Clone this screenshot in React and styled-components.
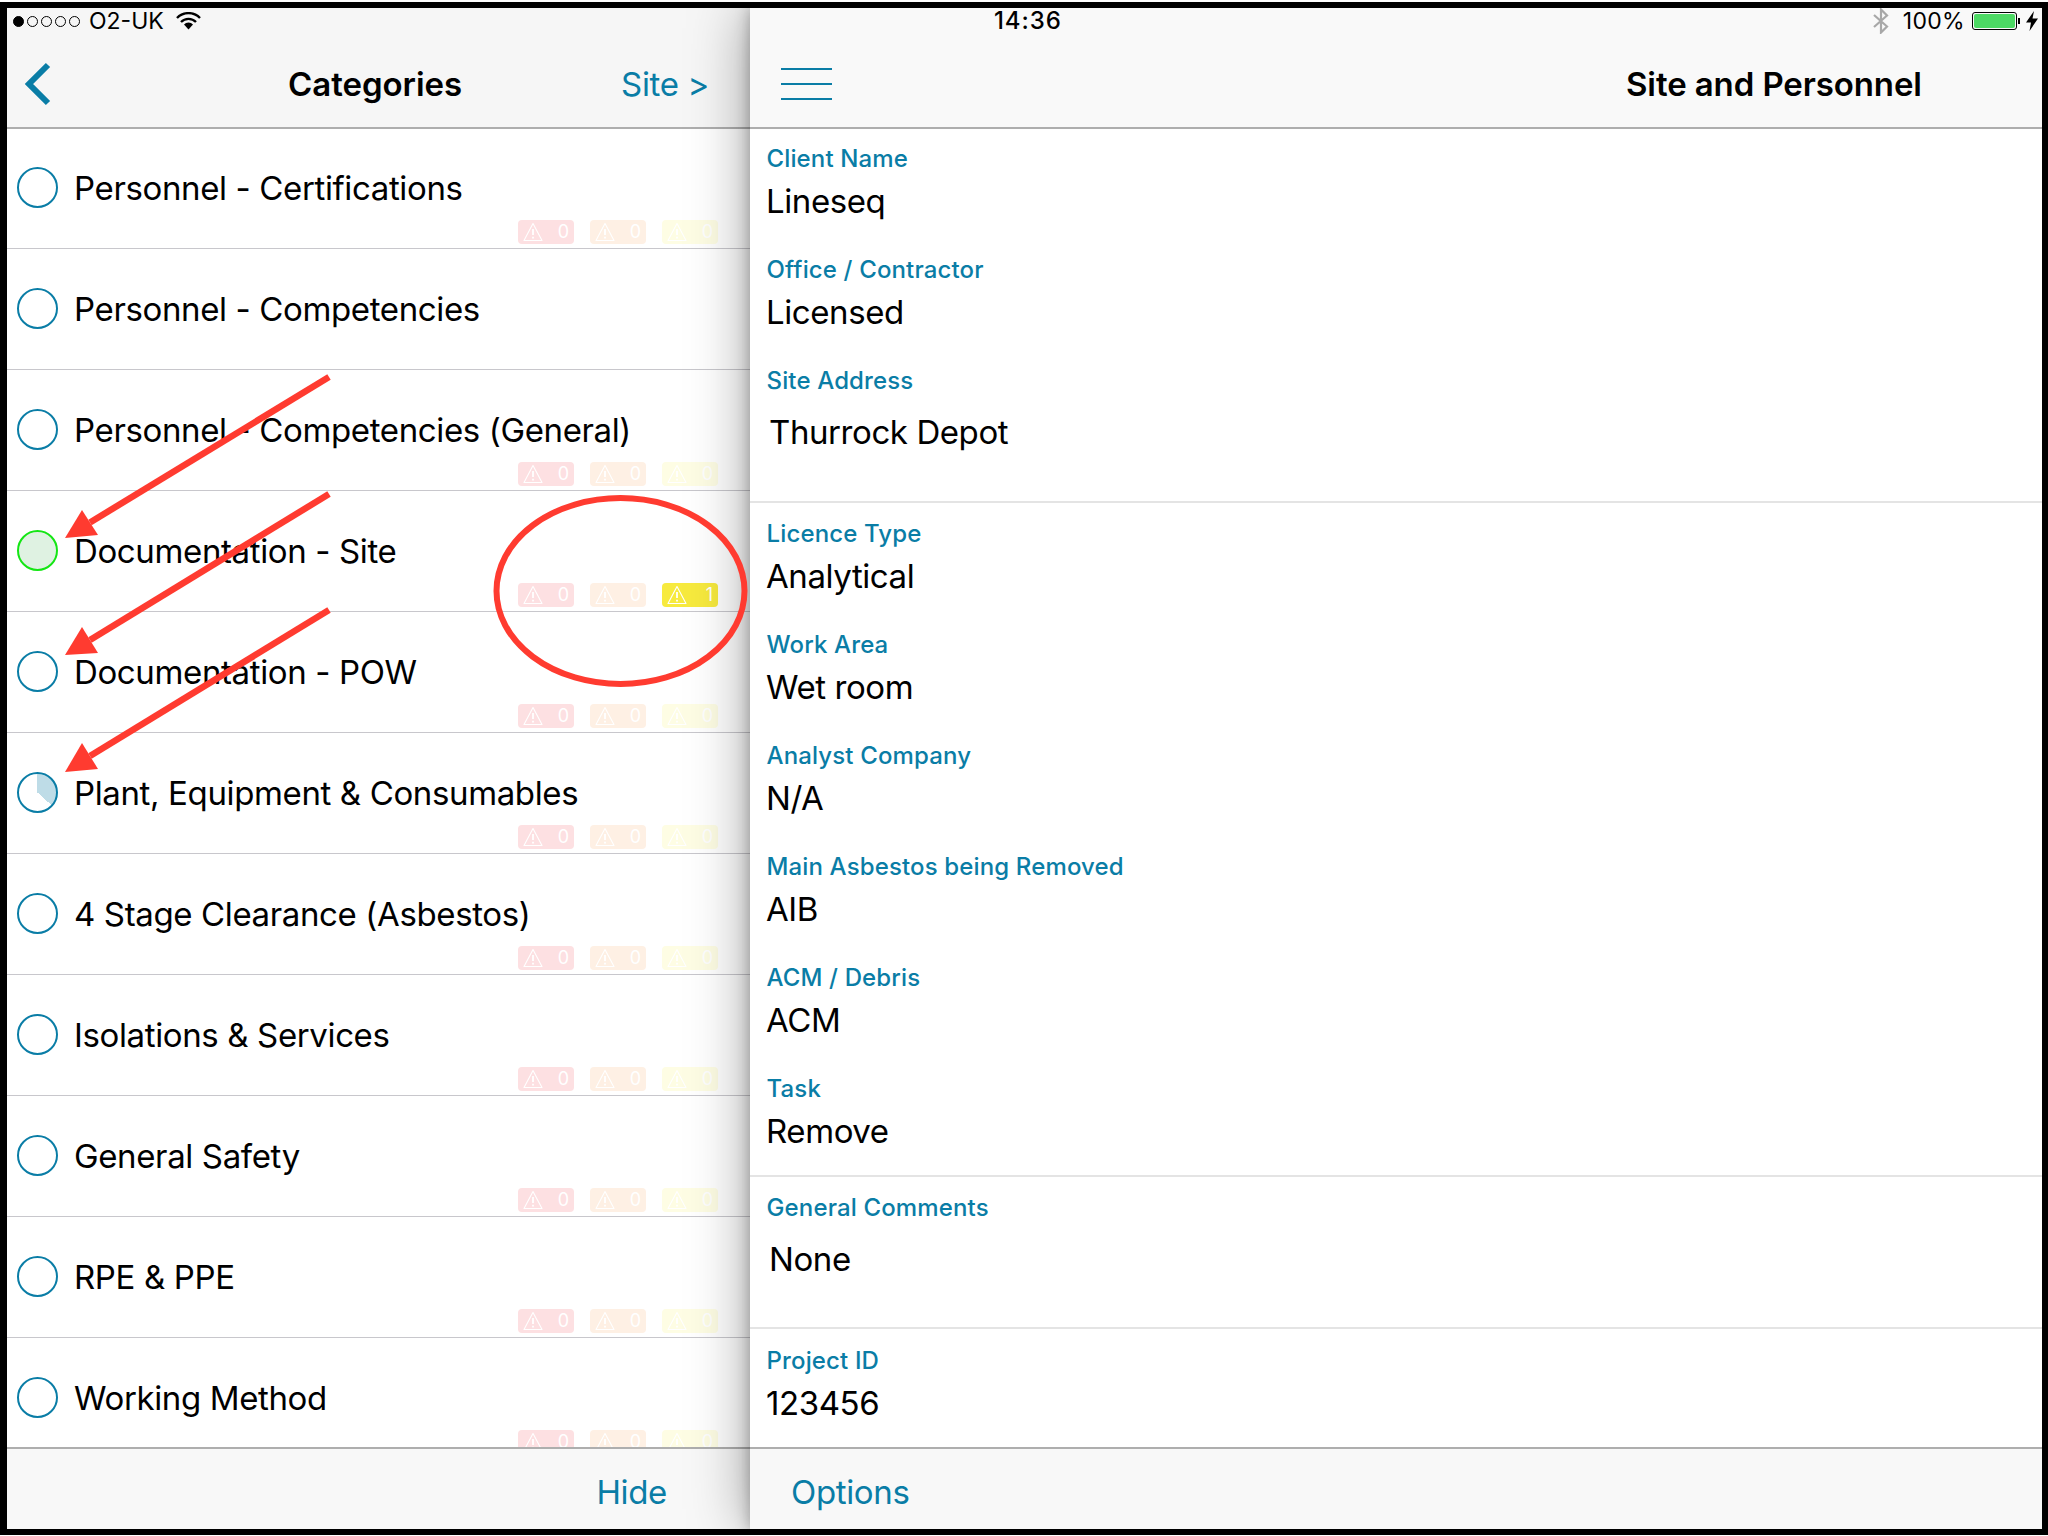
import React from 'react';
import styled, { createGlobalStyle } from 'styled-components';

const BLUE = '#0a7da6';

const Global = createGlobalStyle`
  html, body { margin: 0; padding: 0; background: #fff; }
  body { font-family: Inter, "Liberation Sans", sans-serif; color: #000; }
`;

const categories = [
  { name: 'Personnel - Certifications', yellow: 0 },
  { name: 'Personnel - Competencies', noBadges: true },
  { name: 'Personnel - Competencies (General)', yellow: 0 },
  { name: 'Documentation - Site', status: 'done', yellow: 1 },
  { name: 'Documentation - POW', yellow: 0 },
  { name: 'Plant, Equipment & Consumables', status: 'part', yellow: 0 },
  { name: '4 Stage Clearance (Asbestos)', yellow: 0 },
  { name: 'Isolations & Services', yellow: 0 },
  { name: 'General Safety', yellow: 0 },
  { name: 'RPE & PPE', yellow: 0 },
  { name: 'Working Method', yellow: 0 },
];

const sections = [
  {
    fields: [
      { label: 'Client Name', value: 'Lineseq' },
      { label: 'Office / Contractor', value: 'Licensed' },
      { label: 'Site Address', value: 'Thurrock Depot', area: true },
    ],
    top: 14,
    bottom: 1,
  },
  {
    fields: [
      { label: 'Licence Type', value: 'Analytical' },
      { label: 'Work Area', value: 'Wet room' },
      { label: 'Analyst Company', value: 'N/A' },
      { label: 'Main Asbestos being Removed', value: 'AIB' },
      { label: 'ACM / Debris', value: 'ACM' },
      { label: 'Task', value: 'Remove' },
    ],
    top: 15,
    bottom: 16,
  },
  {
    fields: [{ label: 'General Comments', value: 'None', area: true }],
    top: 15,
    bottom: 0,
  },
  {
    fields: [{ label: 'Project ID', value: '123456' }],
    top: 16,
    bottom: 0,
    last: true,
  },
];

const arrows = [
  { tail: [329, 377], tip: [65, 538], a: [82, 510], b: [98, 535] },
  { tail: [329, 494], tip: [65, 655], a: [82, 627], b: [98, 653] },
  { tail: [329, 610], tip: [65, 772], a: [82, 743], b: [98, 769] },
];

const WarningIcon = () => (
  <svg width="20" height="20" viewBox="0 0 20 20" fill="none" stroke="#fff" strokeWidth="1.1" strokeLinejoin="round">
    <path d="M10 1.5 L19 18.5 H1 Z" />
    <path d="M10 7 V13" strokeWidth="1.8" />
    <path d="M10 14.8 V16.4" strokeWidth="1.8" />
  </svg>
);

const Badge = ({ tone, count }) => (
  <BadgeBox $tone={tone} $on={count > 0}>
    <WarningIcon />
    <BadgeCount>{count}</BadgeCount>
  </BadgeBox>
);

const Wifi = () => (
  <svg width="25" height="18" viewBox="0 0 25 18" fill="none" stroke="#000" strokeWidth="2.4">
    <path d="M1 6 A16 16 0 0 1 24 6" />
    <path d="M5 10 A10.5 10.5 0 0 1 20 10" />
    <path d="M12.5 17.5 L8 12.6 A6 6 0 0 1 17 12.6 Z" fill="#000" stroke="none" />
  </svg>
);

const BluetoothIcon = () => (
  <svg width="16" height="26" viewBox="0 0 16 26" fill="none" stroke="#a8a8a8" strokeWidth="2.2">
    <path d="M1 7 L14 18.5 L8 24.5 V1.5 L14 7.5 L1 19" />
  </svg>
);

const Battery = () => (
  <BatteryWrap>
    <BatteryShell>
      <BatteryFill />
    </BatteryShell>
    <BatteryTip />
  </BatteryWrap>
);

const Bolt = () => (
  <svg width="12" height="20" viewBox="0 0 12 20" fill="#000">
    <path d="M8 0 L0 11.5 H5 L3.5 20 L12 7.5 H6.5 Z" />
  </svg>
);

const Chevron = () => (
  <svg width="28" height="44" viewBox="0 0 28 44" fill="none" stroke={BLUE} strokeWidth="6">
    <path d="M25 3 L6 22 L25 41" />
  </svg>
);

export default function App() {
  return (
    <Page>
      <Global />
      <Frame>
        <LeftPanel>
          <Header $bg="#f6f6f6">
            <StatusBar>
              <SignalDots>
                {[0, 1, 2, 3, 4].map((i) => (
                  <Dot key={i} $on={i === 0} />
                ))}
              </SignalDots>
              <StatusText>O2-UK</StatusText>
              <Wifi />
            </StatusBar>
            <LeftNav>
              <Chevron />
              <LeftTitle>Categories</LeftTitle>
              <NavLink>Site &gt;</NavLink>
            </LeftNav>
          </Header>
          <List>
            {categories.map((c) => (
              <Row key={c.name}>
                <Circle $status={c.status} />
                <RowName>{c.name}</RowName>
                {!c.noBadges && (
                  <Badges>
                    <Badge tone="red" count={0} />
                    <Badge tone="orange" count={0} />
                    <Badge tone="yellow" count={c.yellow} />
                  </Badges>
                )}
              </Row>
            ))}
          </List>
          <LeftFooter>
            <FooterLink>Hide</FooterLink>
          </LeftFooter>
        </LeftPanel>

        <RightPanel>
          <Header $bg="#f9f9f9">
            <RightStatus>
              <Clock>14:36</Clock>
              <StatusRight>
                <BluetoothIcon />
                <StatusText>100%</StatusText>
                <Battery />
                <Bolt />
              </StatusRight>
            </RightStatus>
            <RightNav>
              <Hamburger>
                <span />
                <span />
                <span />
              </Hamburger>
              <RightTitle>Site and Personnel</RightTitle>
            </RightNav>
          </Header>
          <Details>
            {sections.map((s, i) => (
              <Section key={i} $top={s.top} $bottom={s.bottom} $last={s.last}>
                {s.fields.map((f) => (
                  <div key={f.label}>
                    <FieldLabel>{f.label}</FieldLabel>
                    <FieldValue $area={f.area}>{f.value}</FieldValue>
                  </div>
                ))}
              </Section>
            ))}
          </Details>
          <RightFooter>
            <FooterLink>Options</FooterLink>
          </RightFooter>
        </RightPanel>
      </Frame>

      <Annotations width="2048" height="1536" viewBox="0 0 2048 1536">
        {arrows.map((a, i) => (
          <g key={i}>
            <line x1={a.tail[0]} y1={a.tail[1]} x2={(a.a[0] + a.b[0]) / 2} y2={(a.a[1] + a.b[1]) / 2} stroke="#ff3b30" strokeWidth="6.5" />
            <polygon points={`${a.tip} ${a.a} ${a.b}`} fill="#ff3b30" />
          </g>
        ))}
        <ellipse cx="620.5" cy="591" rx="124" ry="93" fill="none" stroke="#ff3b30" strokeWidth="6" />
      </Annotations>
    </Page>
  );
}

const Page = styled.div`
  position: relative;
  width: 2048px;
  height: 1536px;
  padding-top: 2px;
  box-sizing: border-box;
  overflow: hidden;
`;

const Frame = styled.div`
  display: flex;
  box-sizing: border-box;
  width: 2048px;
  height: 1533px;
  border: solid #000;
  border-width: 6px 6px 6px 7px;
  overflow: hidden;
`;

const LeftPanel = styled.div`
  display: flex;
  flex-direction: column;
  width: 743px;
  flex: none;
  background: #fff;
`;

const RightPanel = styled.div`
  display: flex;
  flex-direction: column;
  flex: 1;
  min-width: 0;
  position: relative;
  z-index: 2;
  background: #fff;
  box-shadow: 0 0 14px rgba(0, 0, 0, 0.28), 0 0 56px rgba(0, 0, 0, 0.38);
`;

const Header = styled.header`
  position: relative;
  z-index: 1;
  box-sizing: border-box;
  height: 121px;
  flex: none;
  background: ${(p) => p.$bg};
  border-bottom: 2px solid #aeaeae;
`;

const StatusBar = styled.div`
  display: flex;
  align-items: center;
  height: 26px;
  padding-left: 6px;
`;

const SignalDots = styled.div`
  display: flex;
  gap: 3px;
  margin-right: 9px;
`;

const Dot = styled.span`
  box-sizing: border-box;
  width: 11px;
  height: 11px;
  border-radius: 50%;
  border: 1px solid #000;
  background: ${(p) => (p.$on ? '#000' : 'transparent')};
`;

const StatusText = styled.span`
  font-size: 23px;
  line-height: 26px;
  margin-right: 12px;
`;

const LeftNav = styled.div`
  display: flex;
  align-items: center;
  height: 93px;
  padding: 7px 41px 0 16px;
  box-sizing: border-box;
`;

const LeftTitle = styled.div`
  font-size: 33px;
  font-weight: 600;
  letter-spacing: -0.05px;
  margin-left: 237px;
`;

const NavLink = styled.div`
  margin-left: auto;
  font-size: 33px;
  letter-spacing: -0.35px;
  color: ${BLUE};
`;

const List = styled.div`
  flex: 1;
  min-height: 0;
  overflow: hidden;
  margin-top: -1px;
`;

const Row = styled.div`
  position: relative;
  display: flex;
  align-items: center;
  box-sizing: border-box;
  height: 121px;
  padding: 0 0 1px 9.5px;
  border-bottom: 1px solid #c8c7cc;
`;

const circleBorder = (status) => (status === 'done' ? '#14e614' : BLUE);

const circleFill = (status) => {
  if (status === 'done') return '#dff2e2';
  if (status === 'part') return 'conic-gradient(#bedce7 0 132deg, transparent 132deg)';
  return 'transparent';
};

const Circle = styled.span`
  box-sizing: border-box;
  flex: none;
  width: 41px;
  height: 41px;
  border-radius: 50%;
  border: 2px solid ${(p) => circleBorder(p.$status)};
  background: ${(p) => circleFill(p.$status)};
`;

const RowName = styled.div`
  margin-left: 16.5px;
  font-size: 33px;
  line-height: 40px;
  letter-spacing: -0.37px;
  white-space: nowrap;
`;

const Badges = styled.div`
  position: absolute;
  right: 32px;
  bottom: 4px;
  display: flex;
  gap: 16px;
`;

const badgeColors = {
  red: '#fde0e2',
  orange: '#fef0e4',
  yellow: '#fefde4',
};

const BadgeBox = styled.div`
  display: flex;
  align-items: center;
  justify-content: space-between;
  box-sizing: border-box;
  width: 56px;
  height: 24px;
  padding: 0 5px;
  border-radius: 4px;
  background: ${(p) => (p.$on ? '#f7ea3e' : badgeColors[p.$tone])};
`;

const BadgeCount = styled.span`
  font-size: 18px;
  line-height: 24px;
  color: #fff;
`;

const LeftFooter = styled.footer`
  display: flex;
  align-items: center;
  justify-content: flex-end;
  box-sizing: border-box;
  flex: none;
  height: 82px;
  padding: 5px 83px 0 0;
  background: #f8f8f8;
  border-top: 2px solid #aeaeae;
`;

const RightFooter = styled(LeftFooter)`
  justify-content: flex-start;
  padding: 5px 0 0 41px;
`;

const FooterLink = styled.div`
  font-size: 33px;
  letter-spacing: -0.35px;
  color: ${BLUE};
`;

const RightStatus = styled.div`
  display: flex;
  align-items: center;
  height: 26px;
`;

const Clock = styled.span`
  margin-left: 244px;
  font-size: 24px;
  font-weight: 500;
  line-height: 26px;
  letter-spacing: 0.9px;
`;

const StatusRight = styled.div`
  display: flex;
  align-items: center;
  margin-left: auto;
  padding-right: 4px;
  gap: 0;
  svg:first-child {
    margin-right: 14px;
  }
  span {
    margin-right: 7px;
    letter-spacing: 0.3px;
  }
`;

const BatteryWrap = styled.div`
  display: flex;
  align-items: center;
  margin-right: 6px;
`;

const BatteryShell = styled.div`
  box-sizing: border-box;
  width: 45px;
  height: 18px;
  padding: 1px;
  border: 1px solid #000;
  border-radius: 3px;
`;

const BatteryFill = styled.div`
  height: 100%;
  border-radius: 2px;
  background: #4cd964;
`;

const BatteryTip = styled.div`
  width: 2px;
  height: 6px;
  margin-left: 1px;
  background: #000;
`;

const RightNav = styled.div`
  display: flex;
  align-items: center;
  box-sizing: border-box;
  height: 93px;
  padding: 7px 0 0 31px;
`;

const Hamburger = styled.div`
  display: flex;
  flex-direction: column;
  gap: 13px;
  width: 51px;
  span {
    height: 2px;
    background: ${BLUE};
  }
`;

const RightTitle = styled.div`
  margin-left: 794px;
  font-size: 33px;
  font-weight: 600;
  letter-spacing: -0.1px;
`;

const Details = styled.div`
  flex: 1;
  min-height: 0;
  overflow: hidden;
`;

const Section = styled.section`
  display: flex;
  flex-direction: column;
  gap: 25px;
  padding: ${(p) => p.$top}px 0 ${(p) => p.$bottom}px 17px;
  border-bottom: ${(p) => (p.$last ? 'none' : '2px solid #e4e4e4')};
`;

const FieldLabel = styled.div`
  height: 30px;
  margin-left: -0.5px;
  font-size: 24px;
  font-weight: 500;
  line-height: 32px;
  letter-spacing: 0.14px;
  color: ${BLUE};
`;

const FieldValue = styled.div`
  height: ${(p) => (p.$area ? 105 : 56)}px;
  margin-left: ${(p) => (p.$area ? 2 : -1)}px;
  font-size: 33px;
  line-height: ${(p) => (p.$area ? 74 : 56)}px;
  letter-spacing: -0.42px;
`;

const Annotations = styled.svg`
  position: absolute;
  top: 0;
  left: 0;
  z-index: 5;
  pointer-events: none;
`;
